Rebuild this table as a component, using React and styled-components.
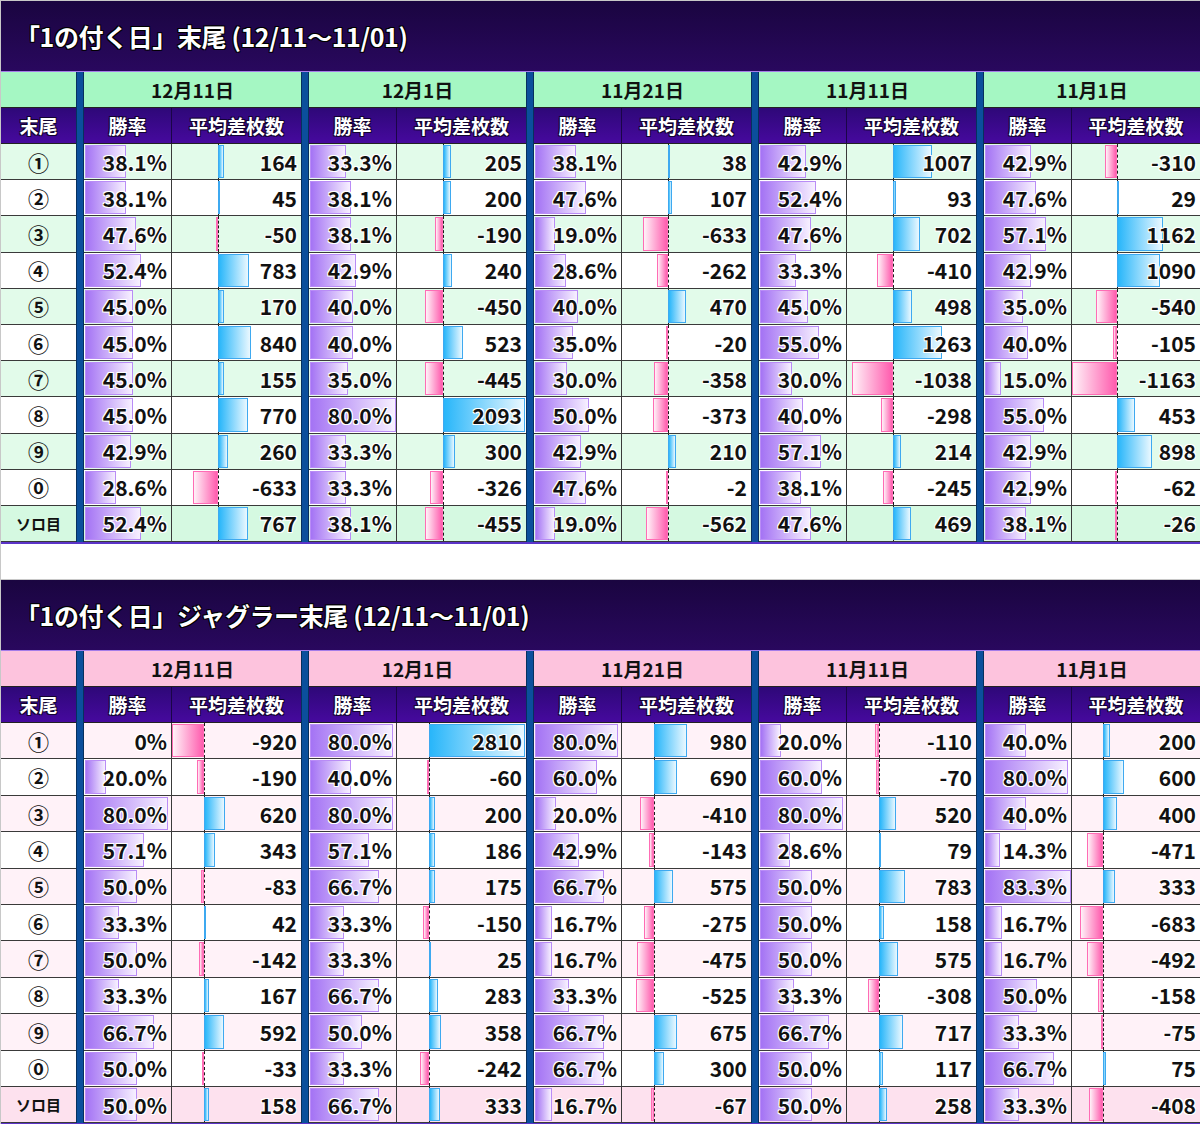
import styled, { createGlobalStyle } from "styled-components";

const GlobalStyle = createGlobalStyle`
  body {
    margin: 0;
    background: #fff;
    font-family: "Noto Sans CJK JP", "Noto Sans", sans-serif;
  }
`;

const COLS = "75px repeat(4, 8px 88px 129px) 8px 88px 1fr";

const Page = styled.div`
  width: 1199px;
  border-left: 1px solid #c8c8c8;
  display: flex;
  flex-direction: column;
  gap: 35px;
`;

const Table = styled.section`
  border-top: 1px solid #c8c8c8;
  border-bottom: 2px solid #5b34c8;
`;

const TitleBar = styled.div`
  height: 70px;
  border-bottom: 1px solid #a47ce8;
  background: linear-gradient(#1a0540, #29085e);
  display: flex;
  align-items: center;
  padding-left: 14px;
  color: #fff;
  font-size: 25px;
  font-weight: 700;
  letter-spacing: -0.4px;
  text-shadow: 1px 1px 0 #000, -1px -1px 0 #000, 1px -1px 0 #000, -1px 1px 0 #000;
`;

const Row = styled.div`
  display: grid;
  grid-template-columns: ${COLS};
  height: ${(p) => p.$h}px;
  background: ${(p) => p.$bg};
`;

const Sep = styled.div`
  background: #0b4f9c;
  border-left: 1px solid #06305e;
  border-right: 1px solid #06305e;
`;

const DateCell = styled.div`
  grid-column: span ${(p) => p.$span || 1};
  background: ${(p) => p.$bg};
  border-bottom: 1px solid #222;
  display: flex;
  align-items: center;
  justify-content: center;
  font-size: 19px;
  font-weight: 700;
  color: #111;
`;

const HeadCell = styled.div`
  background: linear-gradient(#2e0878, #46099e);
  border-bottom: 1px solid #222;
  border-right: ${(p) => (p.$edge ? "1px solid #1a0548" : "none")};
  display: flex;
  align-items: center;
  justify-content: center;
  color: #fff;
  font-size: 19px;
  font-weight: 700;
  text-shadow: 1px 1px 0 #120330, -1px -1px 0 #120330, 1px -1px 0 #120330, -1px 1px 0 #120330;
`;

const KeyCell = styled.div`
  border-bottom: 1px solid #3a3a3a;
  display: flex;
  align-items: center;
  justify-content: center;
  font-size: ${(p) => (p.$small ? 15 : 21)}px;
  font-weight: 700;
  color: #111;
`;

const ValueCell = styled.div`
  position: relative;
  border-bottom: 1px solid #3a3a3a;
  border-right: ${(p) => (p.$edge ? "1px solid #3a3a3a" : "none")};
  display: flex;
  align-items: center;
  justify-content: flex-end;
  padding-right: 4px;
  font-size: 21px;
  font-weight: 700;
  color: #111;
`;

const Num = styled.span`
  position: relative;
  z-index: 2;
  text-shadow: 1px 1px 0 #fff, -1px -1px 0 #fff, 1px -1px 0 #fff, -1px 1px 0 #fff;
`;

const Bar = styled.div`
  position: absolute;
  top: 1px;
  bottom: 1px;
  box-sizing: border-box;
  z-index: 1;
  border: 1px solid ${(p) => p.$line};
  background: linear-gradient(to ${(p) => (p.$rev ? "left" : "right")}, ${(p) => p.$from}, ${(p) => p.$to});
`;

const Axis = styled.div`
  position: absolute;
  top: 0;
  bottom: 0;
  z-index: 1;
  border-left: 1px dashed #1a1a1a;
`;

const DATES = ["12月11日", "12月1日", "11月21日", "11月11日", "11月1日"];
const KEYS = ["①", "②", "③", "④", "⑤", "⑥", "⑦", "⑧", "⑨", "⓪", "ソロ目"];

const TABLE1 = [
  [["38.1", 164], ["33.3", 205], ["38.1", 38], ["42.9", 1007], ["42.9", -310]],
  [["38.1", 45], ["38.1", 200], ["47.6", 107], ["52.4", 93], ["47.6", 29]],
  [["47.6", -50], ["38.1", -190], ["19.0", -633], ["47.6", 702], ["57.1", 1162]],
  [["52.4", 783], ["42.9", 240], ["28.6", -262], ["33.3", -410], ["42.9", 1090]],
  [["45.0", 170], ["40.0", -450], ["40.0", 470], ["45.0", 498], ["35.0", -540]],
  [["45.0", 840], ["40.0", 523], ["35.0", -20], ["55.0", 1263], ["40.0", -105]],
  [["45.0", 155], ["35.0", -445], ["30.0", -358], ["30.0", -1038], ["15.0", -1163]],
  [["45.0", 770], ["80.0", 2093], ["50.0", -373], ["40.0", -298], ["55.0", 453]],
  [["42.9", 260], ["33.3", 300], ["42.9", 210], ["57.1", 214], ["42.9", 898]],
  [["28.6", -633], ["33.3", -326], ["47.6", -2], ["38.1", -245], ["42.9", -62]],
  [["52.4", 767], ["38.1", -455], ["19.0", -562], ["47.6", 469], ["38.1", -26]],
];

const TABLE2 = [
  [["0", -920], ["80.0", 2810], ["80.0", 980], ["20.0", -110], ["40.0", 200]],
  [["20.0", -190], ["40.0", -60], ["60.0", 690], ["60.0", -70], ["80.0", 600]],
  [["80.0", 620], ["80.0", 200], ["20.0", -410], ["80.0", 520], ["40.0", 400]],
  [["57.1", 343], ["57.1", 186], ["42.9", -143], ["28.6", 79], ["14.3", -471]],
  [["50.0", -83], ["66.7", 175], ["66.7", 575], ["50.0", 783], ["83.3", 333]],
  [["33.3", 42], ["33.3", -150], ["16.7", -275], ["50.0", 158], ["16.7", -683]],
  [["50.0", -142], ["33.3", 25], ["16.7", -475], ["50.0", 575], ["16.7", -492]],
  [["33.3", 167], ["66.7", 283], ["33.3", -525], ["33.3", -308], ["50.0", -158]],
  [["66.7", 592], ["50.0", 358], ["66.7", 675], ["66.7", 717], ["33.3", -75]],
  [["50.0", -33], ["33.3", -242], ["66.7", 300], ["50.0", 117], ["66.7", 75]],
  [["50.0", 158], ["66.7", 333], ["16.7", -67], ["50.0", 258], ["33.3", -408]],
];

const PURPLE = { line: "#b98cf6", from: "#a473f4", to: "#f7f0ff" };
const BLUE = { line: "#3ea9f0", from: "#28b6fa", to: "#eaf8ff" };
const PINK = { line: "#ff6cb5", from: "#ff5cae", to: "#fff2f8" };

function DataTable({ title, rows, rowH, dateBg, rowBg, altBg, lastBg }) {
  const pcts = rows.flat().map((c) => parseFloat(c[0]));
  const diffs = rows.flat().map((c) => c[1]);
  const maxPct = Math.max(...pcts);
  const max = Math.max(...diffs);
  const min = Math.min(...diffs);

  return (
    <Table>
      <TitleBar>{title}</TitleBar>
      <Row $h={36}>
        <DateCell $bg={dateBg} />
        {DATES.map((d) => [
          <Sep key={d + "s"} />,
          <DateCell key={d} $bg={dateBg} $span={2}>{d}</DateCell>,
        ])}
      </Row>
      <Row $h={36}>
        <HeadCell>末尾</HeadCell>
        {DATES.map((d) => [
          <Sep key={d + "s"} />,
          <HeadCell key={d + "a"} $edge>勝率</HeadCell>,
          <HeadCell key={d + "b"}>平均差枚数</HeadCell>,
        ])}
      </Row>
      {rows.map((cells, r) => {
        const bg = r === rows.length - 1 ? lastBg : r % 2 === 0 ? rowBg : altBg;
        return (
          <Row key={r} $h={rowH} $bg={bg}>
            <KeyCell $small={r === rows.length - 1}>{KEYS[r]}</KeyCell>
            {cells.map(([pct, diff], g) => {
              const inner = g === 4 ? 127 : 128;
              const axis = (Math.abs(min) / (max - min)) * inner;
              const pw = (parseFloat(pct) / maxPct) * 86;
              const dw = Math.max(diff >= 0 ? (diff / max) * (inner - axis) : (diff / min) * axis, 2);
              const c = diff >= 0 ? BLUE : PINK;
              return [
                <Sep key={g + "s"} />,
                <ValueCell key={g + "a"} $edge>
                  {pw > 0 && <Bar $line={PURPLE.line} $from={PURPLE.from} $to={PURPLE.to} style={{ left: 1, width: pw }} />}
                  <Num>{pct}%</Num>
                </ValueCell>,
                <ValueCell key={g + "b"}>
                  <Axis style={{ left: axis }} />
                  <Bar
                    $line={c.line}
                    $from={c.from}
                    $to={c.to}
                    $rev={diff < 0}
                    style={{ left: diff >= 0 ? axis : axis - dw, width: dw }}
                  />
                  <Num>{diff}</Num>
                </ValueCell>,
              ];
            })}
          </Row>
        );
      })}
    </Table>
  );
}

export default function App() {
  return (
    <>
      <GlobalStyle />
      <Page>
        <DataTable
          title="「1の付く日」末尾 (12/11〜11/01)"
          rows={TABLE1}
          rowH={36.2}
          dateBg="#a5f7c3"
          rowBg="#e2fbea"
          altBg="#ffffff"
          lastBg="#d5f9e1"
        />
        <DataTable
          title="「1の付く日」ジャグラー末尾 (12/11〜11/01)"
          rows={TABLE2}
          rowH={36.4}
          dateBg="#fdc3dd"
          rowBg="#fff2f8"
          altBg="#ffffff"
          lastBg="#fde1ee"
        />
      </Page>
    </>
  );
}
